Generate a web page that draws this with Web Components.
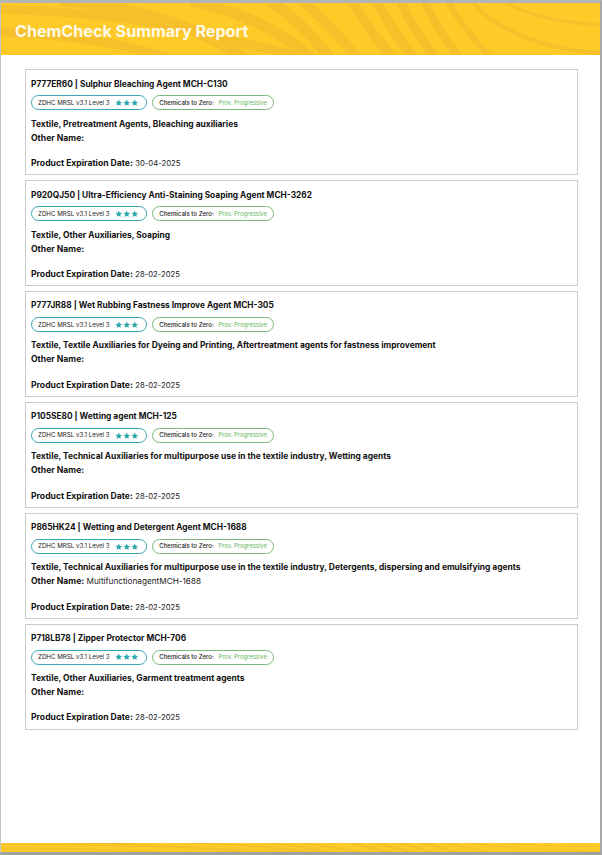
<!DOCTYPE html>
<html lang="en">
<head>
<meta charset="utf-8">
<title>ChemCheck Summary Report</title>
<style>
  html, body { margin: 0; padding: 0; background: #fff; }
  body { font-family: Inter, "Liberation Sans", sans-serif; color: #111; }
</style>
</head>
<body>
<report-page>
  <wave-band slot="header" height="52"><span class="report-title">ChemCheck Summary Report</span></wave-band>

  <product-card code="P777ER60" name="Sulphur Bleaching Agent MCH-C130" category="Textile, Pretreatment Agents, Bleaching auxiliaries" expires="30-04-2025"></product-card>
  <product-card code="P920QJ50" name="Ultra-Efficiency Anti-Staining Soaping Agent MCH-3262" category="Textile, Other Auxiliaries, Soaping" expires="28-02-2025"></product-card>
  <product-card code="P777JR88" name="Wet Rubbing Fastness Improve Agent MCH-305" category="Textile, Textile Auxiliaries for Dyeing and Printing, Aftertreatment agents for fastness improvement" expires="28-02-2025"></product-card>
  <product-card code="P105SE80" name="Wetting agent MCH-125" category="Textile, Technical Auxiliaries for multipurpose use in the textile industry, Wetting agents" expires="28-02-2025"></product-card>
  <product-card code="P865HK24" name="Wetting and Detergent Agent MCH-1688" category="Textile, Technical Auxiliaries for multipurpose use in the textile industry, Detergents, dispersing and emulsifying agents" other="MultifunctionagentMCH-1688" expires="28-02-2025"></product-card>
  <product-card code="P718LB78" name="Zipper Protector MCH-706" category="Textile, Other Auxiliaries, Garment treatment agents" expires="28-02-2025"></product-card>

  <wave-band slot="footer" height="9"></wave-band>
</report-page>

<script>
class ReportPage extends HTMLElement {
  constructor() {
    super();
    this.attachShadow({ mode: "open" });
    this.shadowRoot.innerHTML = `
      <style>
        :host {
          display: flex;
          flex-direction: column;
          box-sizing: border-box;
          height: 855px;
          border-top: 3px solid #b4b4b4;
          border-left: 1px solid #c4c4c4;
          border-right: 2px solid #a8a8a8;
          border-bottom: 3px solid #a0a0a0;
          background: #fff;
        }
        main {
          flex: 1;
          display: flex;
          flex-direction: column;
          gap: 5px;
          padding: 14.450px 22px 0 24px;
        }
      </style>
      <slot name="header"></slot>
      <main><slot></slot></main>
      <slot name="footer"></slot>
    `;
  }
}

class WaveBand extends HTMLElement {
  connectedCallback() {
    if (this.shadowRoot) return;
    const height = this.getAttribute("height") || "52";
    // stripes of the yellow artwork, drawn in a 600x52 box and squashed for the footer
    const stripes = [
      ["M-10 6C60 8 140 14 200 30S280 46 300 56", 9],
      ["M-10 28C50 31 120 38 170 56", 9],
      ["M60 -2C130 2 190 20 246 56", 11],
      ["M190 -2C240 8 280 28 312 56", 11],
      ["M268 -2C290 10 310 30 330 56", 11],
      ["M303 -2C320 14 340 34 358 56", 10],
      ["M352 -2C362 16 376 36 393 56", 10],
      ["M376 -2C386 16 398 36 414 56", 10],
      ["M400 -2C408 16 420 36 436 56", 9],
      ["M424 -2C432 16 444 36 460 56", 8],
      ["M447 -2C458 16 474 38 492 56", 6],
      ["M472 -2C492 24 540 47 602 50", 4],
      ["M503 -2C530 14 565 20 602 22", 3]
    ];
    const paths = stripes.map(([d, w]) => `<path d="${d}" stroke-width="${w}"/>`).join("");
    this.attachShadow({ mode: "open" }).innerHTML = `
      <style>
        :host {
          display: flex;
          align-items: center;
          position: relative;
          height: ${height}px;
          background: #fdca27;
          overflow: hidden;
        }
        svg {
          position: absolute;
          inset: 0;
          width: 100%;
          height: 100%;
        }
        path { fill: none; stroke: #f5c02a; }
        .label {
          position: relative;
          padding: 4px 0 0 14px;
          font-size: 16.150px;
          font-weight: 700;
          color: #fff9e8;
        }
      </style>
      <svg viewBox="0 0 600 52" preserveAspectRatio="none" aria-hidden="true">${paths}</svg>
      <div class="label"><slot></slot></div>
    `;
  }
}

class ChipBadge extends HTMLElement {
  constructor() {
    super();
    this.attachShadow({ mode: "open" });
    this.shadowRoot.innerHTML = `
      <style>
        :host {
          display: inline-flex;
          align-items: center;
          box-sizing: border-box;
          height: 15px;
          padding: 0 6px;
          border: 1px solid var(--chip-color, #3ba6b6);
          border-radius: 8px;
          font-size: 6.200px;
          color: #222;
          white-space: nowrap;
        }
      </style>
      <slot></slot>
    `;
  }
}

class StarRow extends HTMLElement {
  constructor() {
    super();
    this.attachShadow({ mode: "open" });
    const star = `<svg viewBox="0 0 24 24" width="7.500" height="7.500"><path d="M12 1.500l3.200 7 7.600.8-5.700 5.100 1.600 7.500L12 18.100l-6.700 3.800 1.600-7.500L1.200 9.300l7.600-.8z"/></svg>`;
    this.shadowRoot.innerHTML = `
      <style>
        :host { display: inline-flex; gap: 0.500px; margin: 0 1px 0 5.500px; }
        svg { display: block; fill: #2ea7ad; }
      </style>
      ${star}${star}${star}
    `;
  }
}

class ProductCard extends HTMLElement {
  connectedCallback() {
    if (this.shadowRoot) return;
    const code = this.getAttribute("code") || "";
    const name = this.getAttribute("name") || "";
    const category = this.getAttribute("category") || "";
    const other = this.getAttribute("other") || "";
    const expires = this.getAttribute("expires") || "";

    this.attachShadow({ mode: "open" }).innerHTML = `
      <style>
        :host {
          display: block;
          box-sizing: border-box;
          height: 105.850px;
          padding: 7.250px 5px 0;
          border: 1px solid #c8cccc;
          font-size: 8.420px;
          line-height: 14px;
          color: #111;
        }
        .title { font-weight: 700; font-size: 8.350px; line-height: 13px; }
        .chips { display: flex; gap: 5px; margin: 4.700px 0 6.300px; }
        b { font-weight: 700; }
        b.key { font-size: 8.600px; }
        .other { font-size: 8.200px; color: #222; }
        .date { font-size: 7.700px; color: #222; }
        .level { --chip-color: #3ba6b6; }
        .zero { --chip-color: #79b77b; padding-right: 6.500px; }
        .zero-label { font-size: 6.100px; font-weight: 500; margin-left: 0.500px; }
        .grade { font-size: 5.900px; color: #63b55c; margin-left: 4.500px; }
        .expires { margin-top: 11.600px; }
      </style>
      <div class="title">${code} | ${name}</div>
      <div class="chips">
        <chip-badge class="level">ZDHC MRSL v3.1 Level 3<star-row></star-row></chip-badge>
        <chip-badge class="zero"><span class="zero-label">Chemicals to Zero:</span><span class="grade">Prov. Progressive</span></chip-badge>
      </div>
      <div><b>${category}</b></div>
      <div><b class="key">Other Name:</b> <span class="other">${other}</span></div>
      <div class="expires"><b class="key">Product Expiration Date:</b> <span class="date">${expires}</span></div>
    `;
  }
}

customElements.define("report-page", ReportPage);
customElements.define("wave-band", WaveBand);
customElements.define("chip-badge", ChipBadge);
customElements.define("star-row", StarRow);
customElements.define("product-card", ProductCard);
</script>
</body>
</html>
